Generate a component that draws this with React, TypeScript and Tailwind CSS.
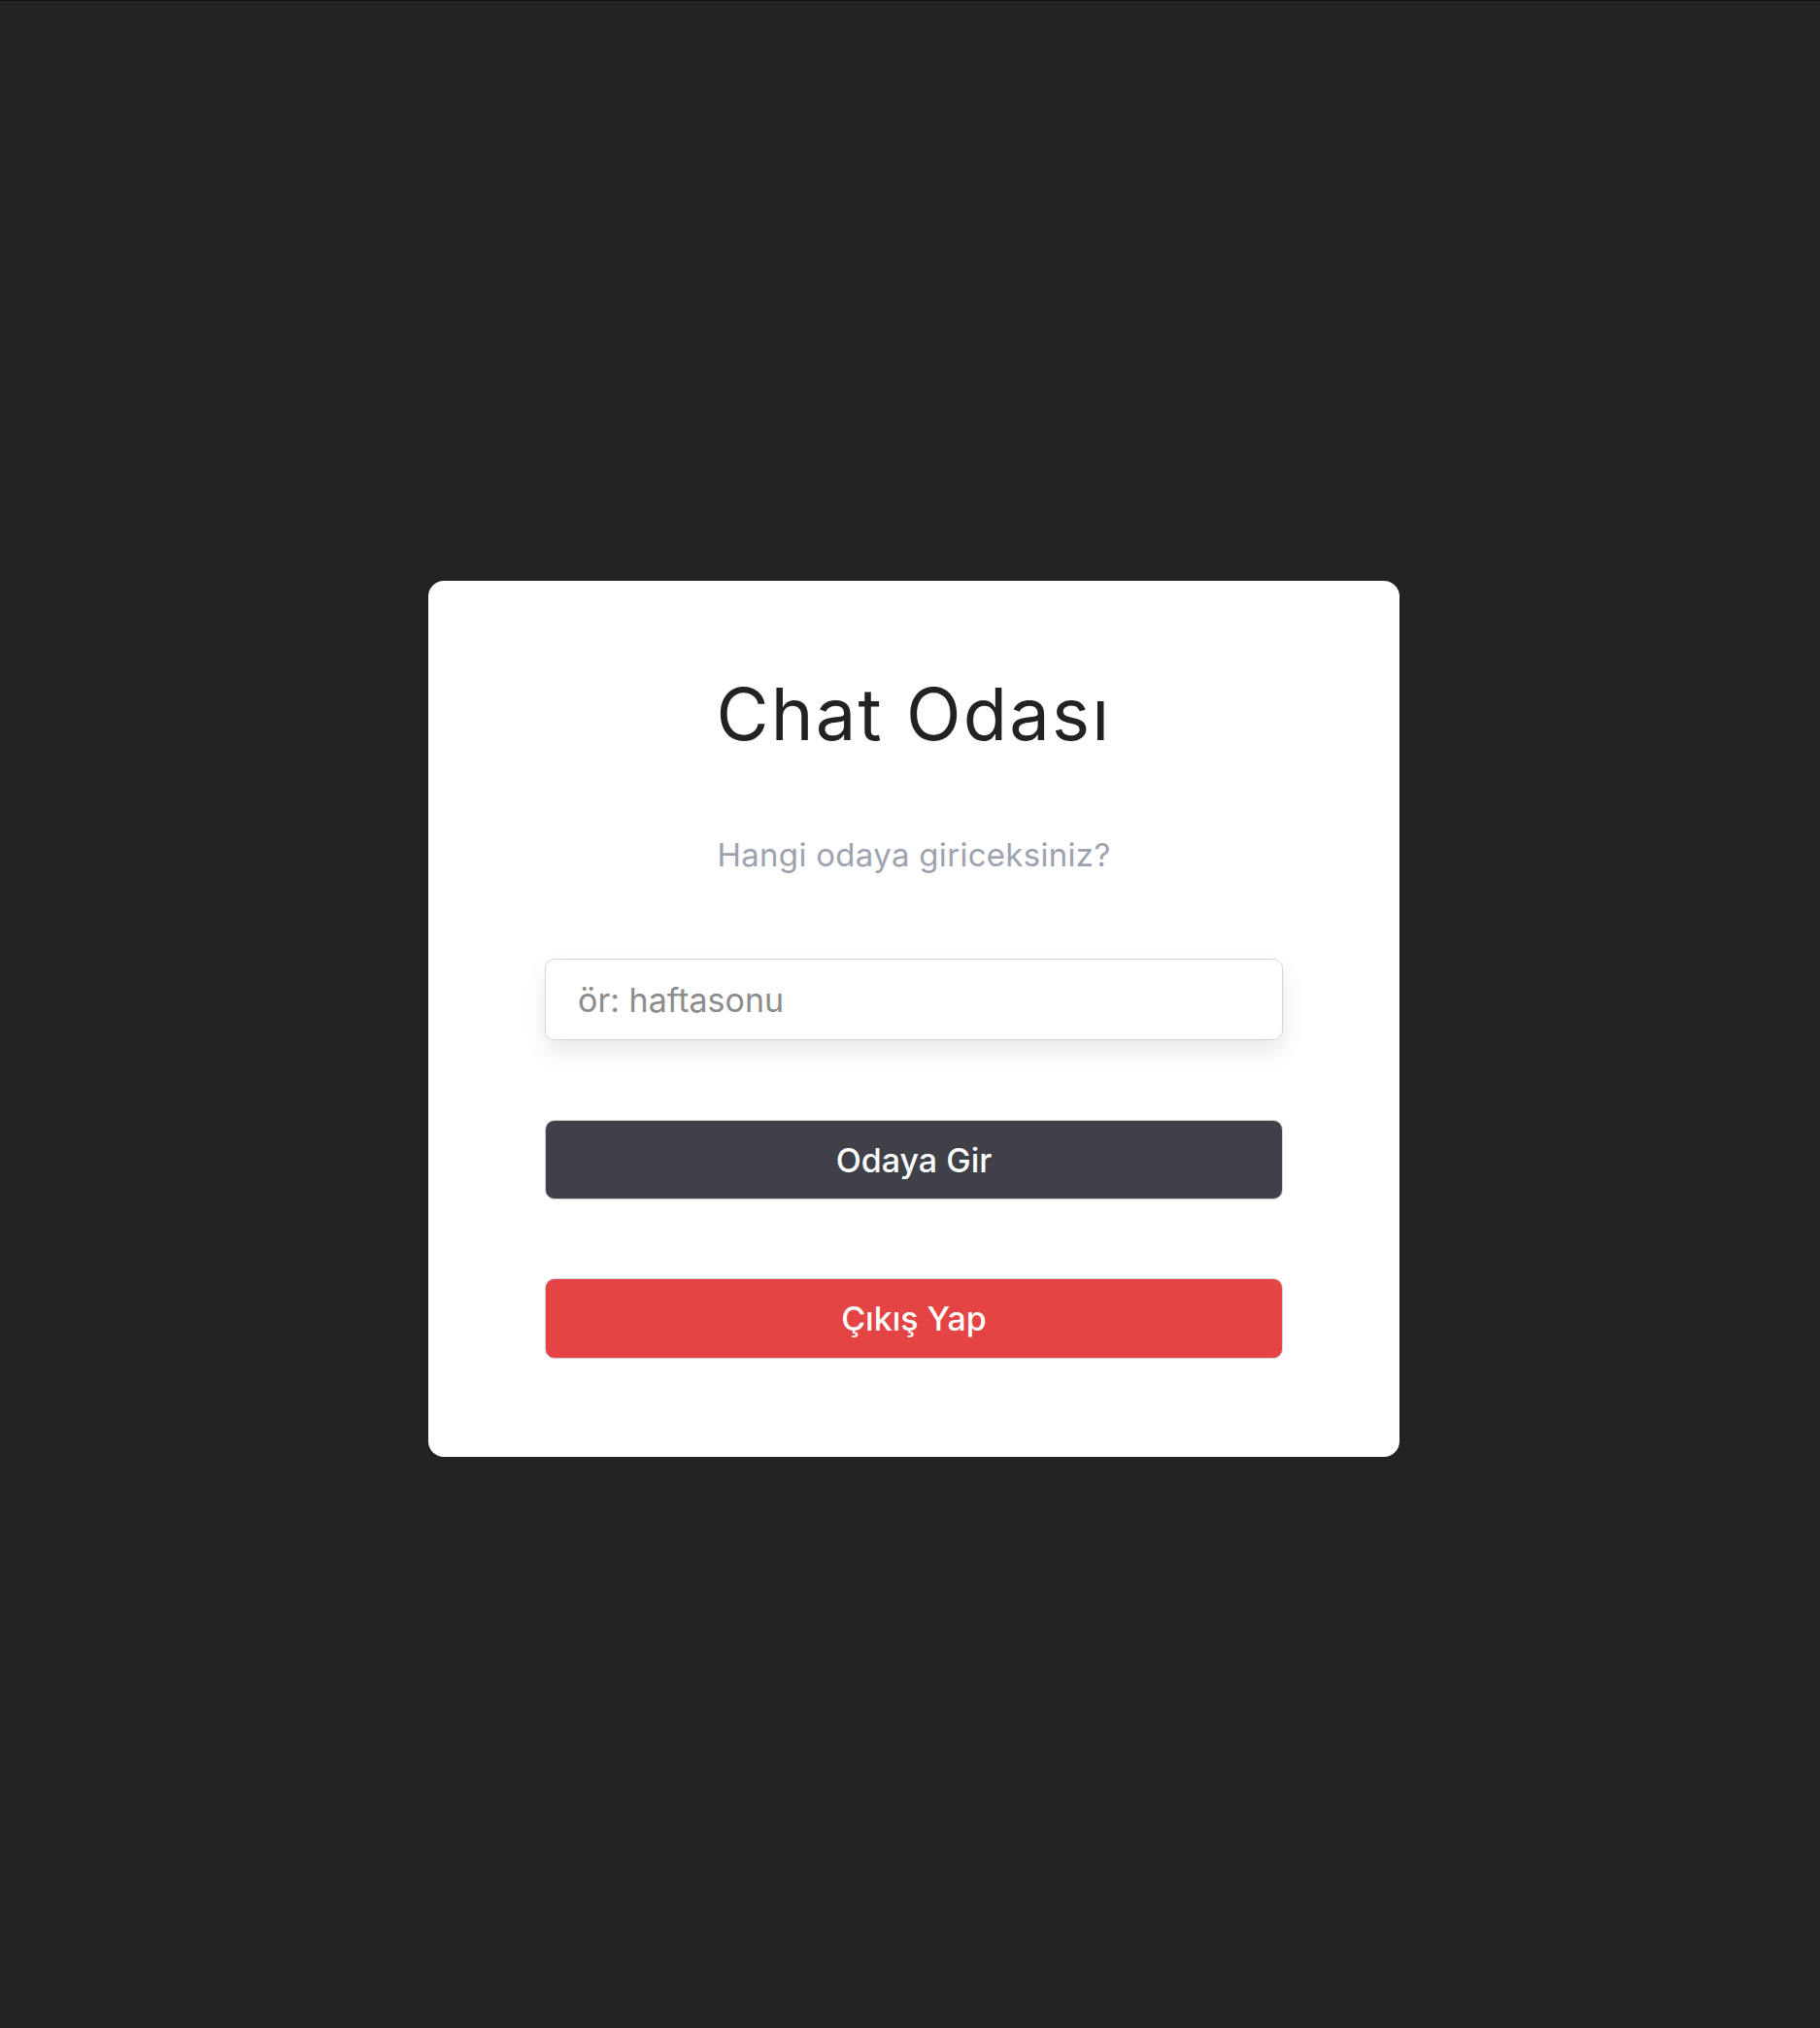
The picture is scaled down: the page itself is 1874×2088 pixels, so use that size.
import React from "react";

export default function App() {
  return (
    <div className="min-h-screen w-full bg-[#232323] border-t border-[#111111] flex items-center justify-center pt-[9px] pl-[8px] font-['Inter','Noto_Sans',sans-serif]">
      <div className="w-[1000px] bg-white rounded-2xl px-[120px] pt-[100px] pb-[101px] flex flex-col">
        <h1 className="h-[74px] text-[74px] leading-none font-normal text-[#222222] text-center tracking-[2.2px]">
          Chat Odası
        </h1>
        <p className="mt-[92px] h-[33px] text-[33px] leading-none text-[#9ca3af] text-center tracking-[0.3px]">
          Hangi odaya giriceksiniz?
        </p>
        <input
          type="text"
          placeholder="ör: haftasonu"
          className="mt-[90px] h-[84px] w-full rounded-[10px] border border-[#d1d5db] bg-white px-[33px] text-[34px] text-[#222] placeholder:text-[#8c8c8c] outline-none shadow-[0_12px_24px_rgba(0,0,0,0.09)]"
        />
        <button className="mt-[82px] h-[82px] w-full rounded-[10px] border border-[#d1d5db] bg-[#404148] text-white text-[34px] font-medium flex items-center justify-center">
          Odaya Gir
        </button>
        <button className="mt-[81px] h-[83px] w-full rounded-[10px] border border-[#d1d5db] bg-[#e54444] text-white text-[34px] font-medium flex items-center justify-center">
          Çıkış Yap
        </button>
      </div>
    </div>
  );
}
